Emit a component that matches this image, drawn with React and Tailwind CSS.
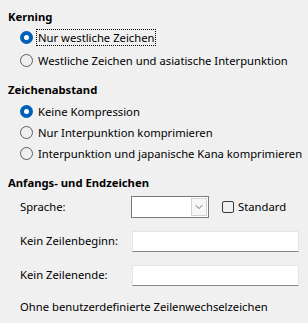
import { ChevronDown } from 'lucide-react';

const Radio = ({ checked, label, focused, className }) => (
  <div className={`flex items-center pl-3 ${className}`}>
    {checked ? (
      <span className="w-[13px] h-[13px] rounded-full bg-[#005fb8] flex items-center justify-center shrink-0">
        <span className="w-[5px] h-[5px] rounded-full bg-white" />
      </span>
    ) : (
      <span className="w-[13px] h-[13px] rounded-full border border-[#5c5c5c] shrink-0" />
    )}
    <span
      className={`ml-[3px] px-px leading-[15px] whitespace-nowrap ${
        focused ? 'border border-dotted border-black' : 'border border-transparent'
      }`}
    >
      {label}
    </span>
  </div>
);

const Header = ({ children, className }) => (
  <div className={`h-4 flex items-center font-bold ${className}`}>{children}</div>
);

const TextInput = () => (
  <div className="w-[167px] h-[21px] bg-white border border-[#e5e5e5] border-b-[#868686]" />
);

export default function App() {
  return (
    <div className="w-[308px] h-[323px] bg-[#f0f0f0] pl-2 pt-[9px] text-[11.25px] text-black font-['Noto_Sans',sans-serif] overflow-hidden">
      <Header>Kerning</Header>
      <div className="flex flex-col">
        <Radio checked focused label="Nur westliche Zeichen" className="h-[23px] mt-px" />
        <Radio label="Westliche Zeichen und asiatische Interpunktion" className="h-[23px]" />
      </div>

      <Header className="mt-[10px]">Zeichenabstand</Header>
      <div className="flex flex-col mt-[2px]">
        <Radio checked label="Keine Kompression" className="h-[22px]" />
        <Radio label="Nur Interpunktion komprimieren" className="h-[21px]" />
        <Radio label="Interpunktion und japanische Kana komprimieren" className="h-[21px]" />
      </div>

      <Header className="mt-[11px]">Anfangs- und Endzeichen</Header>
      <div className="pl-3 flex flex-col">
        <div className="h-[22px] mt-[5px] flex items-center">
          <span className="w-[111px]">Sprache:</span>
          <div className="w-[78px] h-[22px] bg-white border border-[#7a7a7a] flex justify-end p-px">
            <div className="w-[16px] h-full bg-[#f7f7f7] border border-[#d4d4d4] flex items-center justify-center">
              <ChevronDown size={12} strokeWidth={1.4} className="text-[#333]" />
            </div>
          </div>
          <span className="ml-[13px] w-[12px] h-[12px] rounded-[2px] border border-[#3a3a3a]" />
          <span className="ml-[4px]">Standard</span>
        </div>
        <div className="h-[21px] mt-[13px] flex items-center">
          <span className="w-[112px]">Kein Zeilenbeginn:</span>
          <TextInput />
        </div>
        <div className="h-[21px] mt-[13px] flex items-center">
          <span className="w-[112px]">Kein Zeilenende:</span>
          <TextInput />
        </div>
        <div className="h-4 mt-[13px] flex items-center whitespace-nowrap">
          Ohne benutzerdefinierte Zeilenwechselzeichen
        </div>
      </div>
    </div>
  );
}
